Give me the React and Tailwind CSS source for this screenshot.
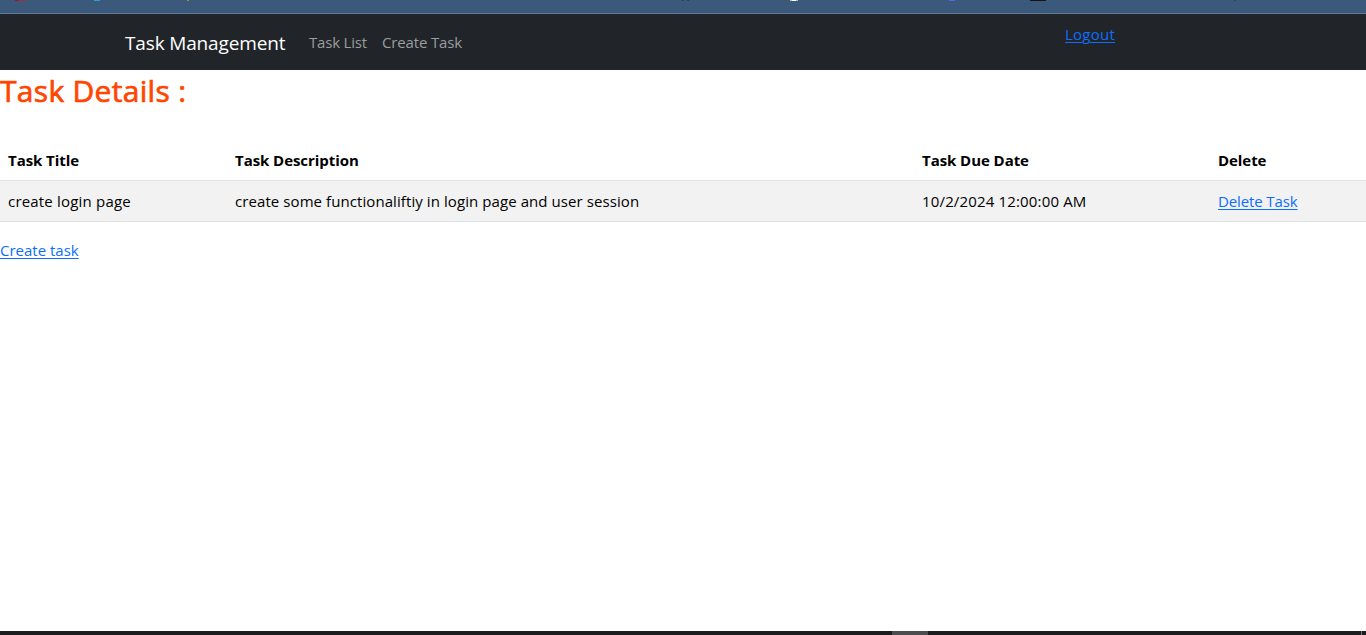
const specks = [
  "left-[15px] w-[4px] bg-[#b01018]",
  "left-[21px] w-[4px] bg-[#d01822]",
  "left-[94px] w-[6px] bg-[#2a9fd8]",
  "left-[187px] w-[2px] bg-[#a8864e]",
  "left-[682px] w-[2px] bg-[#2c3e54]",
  "left-[687px] w-[2px] bg-[#2c3e54]",
  "left-[790px] w-[8px] bg-[#b5c1cf]",
  "left-[792px] w-[4px] bg-[#ffffff]",
  "left-[949px] w-[6px] bg-[#5b62ea]",
  "left-[1030px] w-[16px] bg-[#14161a]",
  "left-[1234px] w-[2px] bg-[#2c4763]",
];

const link = "text-[#0d6efd] underline underline-offset-2 decoration-1";

export default function App() {
  return (
    <div className="flex h-[635px] w-[1366px] flex-col overflow-hidden bg-white font-['Open_Sans','Noto_Sans',sans-serif] text-[15px] leading-6 text-black">
      <div className="relative h-[14px] shrink-0 border-b border-[#60799a] bg-[#3a597b]">
        {specks.map((c) => (
          <span key={c} className={`absolute top-0 h-px ${c}`} />
        ))}
      </div>
      <nav className="flex h-14 shrink-0 bg-[#212529] pl-[125px]">
        <a className="w-[184px] pt-[14px] text-[19px] leading-[30px] tracking-[-0.15px] text-white">Task Management</a>
        <a className="w-[73px] whitespace-nowrap pt-4 tracking-[-0.2px] text-[#9b9d9f]">Task List</a>
        <a className="w-[683px] pt-4 tracking-[-0.15px] text-[#9b9d9f]">Create Task</a>
        <a className={`pt-2 tracking-[0.25px] ${link}`}>Logout</a>
      </nav>
      <main>
        <h2 className="h-[69px] pt-[2px] text-[30px] font-medium leading-[38px] tracking-[0.3px] text-[#ff4500] [-webkit-text-stroke:0.7px_#ff4500]">Task Details :</h2>
        <table className="w-full table-fixed border-collapse text-left">
          <colgroup>
            <col className="w-[227px]" />
            <col className="w-[687px]" />
            <col className="w-[296px]" />
            <col className="w-[156px]" />
          </colgroup>
          <thead>
            <tr className="h-[41px] border-b border-[#dee2e6] font-bold tracking-[-0.06px]">
              <th className="px-2 pt-0.5">Task Title</th>
              <th className="px-2 pt-0.5">Task Description</th>
              <th className="px-2 pt-0.5">Task Due Date</th>
              <th className="px-2 pt-0.5">Delete</th>
            </tr>
          </thead>
          <tbody>
            <tr className="h-[41px] border-b border-[#dee2e6] bg-[#f2f2f2]">
              <td className="px-2 tracking-[0.19px]">create login page</td>
              <td className="px-2 tracking-[0.08px]">create some functionaliftiy in login page and user session</td>
              <td className="px-2 tracking-[0.16px]">10/2/2024 12:00:00 AM</td>
              <td className="px-2 tracking-[-0.12px]"><a className={link}>Delete Task</a></td>
            </tr>
          </tbody>
        </table>
        <p className="pt-4"><a className={link}>Create task</a></p>
      </main>
      <footer className="mt-auto flex h-1 shrink-0 bg-[#1c1b1e]">
        <div className="ml-[892px] h-1 w-9 bg-[#4d4c4f]" />
        <div className="ml-[433px] h-1 w-px bg-[#77777a]" />
      </footer>
    </div>
  );
}
